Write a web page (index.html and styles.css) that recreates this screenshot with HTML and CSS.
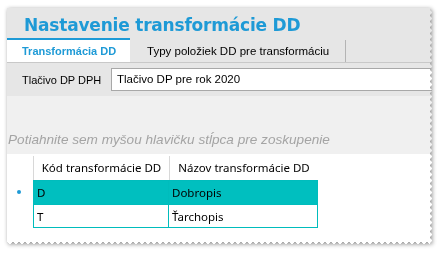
FILE: index.html
```html
<!DOCTYPE html>
<html>
<head>
<meta charset="utf-8">
<link rel="stylesheet" href="styles.css">
</head>
<body>
<div class="sheet">
  <div class="panel">
    <div class="title">Nastavenie transformácie DD</div>
    <div class="tabs">
      <div class="tab active">Transformácia DD</div>
      <div class="tab">Typy položiek DD pre transformáciu</div>
      <div class="tab-rest"></div>
    </div>
    <div class="form-row">
      <span class="label">Tlačivo DP DPH</span>
      <div class="input">Tlačivo DP pre rok 2020</div>
    </div>
    <div class="group-area">Potiahnite sem myšou hlavičku stĺpca pre zoskupenie</div>
    <div class="grid-area">
      <div class="grid">
        <div class="ind"></div>
        <div class="hcell">Kód transformácie DD</div>
        <div class="hcell">Názov transformácie DD</div>
        <div class="ind"><span class="dot"></span></div>
        <div class="cell sel first">D</div>
        <div class="cell sel">Dobropis</div>
        <div class="ind"></div>
        <div class="cell first last">T</div>
        <div class="cell last">Ťarchopis</div>
      </div>
    </div>
  </div>
</div>
</body>
</html>
```
FILE: styles.css
```css
html, body {
  margin: 0;
  padding: 0;
  background: #ffffff;
}
body {
  width: 446px;
  height: 256px;
  overflow: hidden;
  font-family: "Liberation Sans", Arial, sans-serif;
}
.sheet {
  padding: 8px 0 0 7px;
  filter: drop-shadow(1px 1px 2px rgba(0,0,0,0.45));
}
.panel {
  --s: 6px;
  width: 426px;
  height: 237px;
  background: #ffffff;
  display: flex;
  flex-direction: column;
  overflow: hidden;
  -webkit-mask:
    conic-gradient(from -135deg at right, #0000, #000 1deg 89deg, #0000 90deg) 50% / 100% var(--s),
    conic-gradient(from -45deg at bottom, #0000, #000 1deg 89deg, #0000 90deg) 50% / var(--s) 100%;
  -webkit-mask-composite: source-in;
  mask:
    conic-gradient(from -135deg at right, #0000, #000 1deg 89deg, #0000 90deg) 50% / 100% var(--s),
    conic-gradient(from -45deg at bottom, #0000, #000 1deg 89deg, #0000 90deg) 50% / var(--s) 100%;
  mask-composite: intersect;
}
.title {
  background: #e6e6e6;
  color: #1e9ad6;
  font-family: "DejaVu Sans", sans-serif;
  font-weight: bold;
  font-size: 17px;
  height: 30px;
  line-height: 34px;
  padding-left: 17px;
  letter-spacing: -0.2px;
}
.tabs {
  background: #e6e6e6;
  display: flex;
  height: 24px;
  border-bottom: 1px solid #c8c8c8;
}
.tab {
  font-size: 11.5px;
  color: #000;
  line-height: 22px;
  padding: 0 16px 0 17px;
  border-right: 1px solid #b4b4b4;
  margin-top: 2px;
}
.tab.active {
  background: #ffffff;
  color: #1e9ad6;
  font-weight: bold;
  font-size: 11px;
  border-top: 2px solid #1e9ad6;
  border-right: none;
  margin-top: 0;
  width: 123px;
  padding: 0 0 0 15px;
  box-sizing: border-box;
}
.tab-rest {
  flex: 1;
}
.form-row {
  background: #e6e6e6;
  display: flex;
  align-items: center;
  height: 33px;
  padding-left: 15px;
}
.label {
  font-size: 11px;
  width: 89px;
}
.input {
  flex: 1;
  height: 21px;
  background: #fff;
  border: 1px solid #a8a8a8;
  border-right: none;
  font-size: 11.5px;
  line-height: 21px;
  padding-left: 5px;
}
.group-area {
  background: #f0f0f0;
  height: 58px;
  font-style: italic;
  font-size: 13.6px;
  color: #a4a4a4;
  line-height: 13px;
  padding-top: 37px;
  box-sizing: border-box;
  padding-left: 1px;
}
.grid-area {
  flex: 1;
  background: #fff;
  padding-top: 2px;
}
.grid {
  display: grid;
  grid-template-columns: 26px 136px 149px;
  grid-auto-rows: 24px;
  font-family: "Noto Sans", sans-serif;
  font-size: 11.5px;
}
.ind {
  display: flex;
  align-items: center;
  justify-content: center;
}
.dot {
  width: 4px;
  height: 4px;
  border-radius: 50%;
  background: #1e9ad6;
  margin-left: -3px;
}
.hcell {
  text-align: center;
  line-height: 24px;
  border-left: 1px solid #d8d8d8;
}
.cell {
  line-height: 23px;
  padding-left: 3px;
  border-top: 1px solid #00bcbc;
  border-right: 1px solid #00bcbc;
}
.cell.first {
  border-left: 1px solid #00bcbc;
}
.cell.last {
  border-bottom: 1px solid #00bcbc;
}
.cell.sel {
  background: #00bfbf;
}
```
